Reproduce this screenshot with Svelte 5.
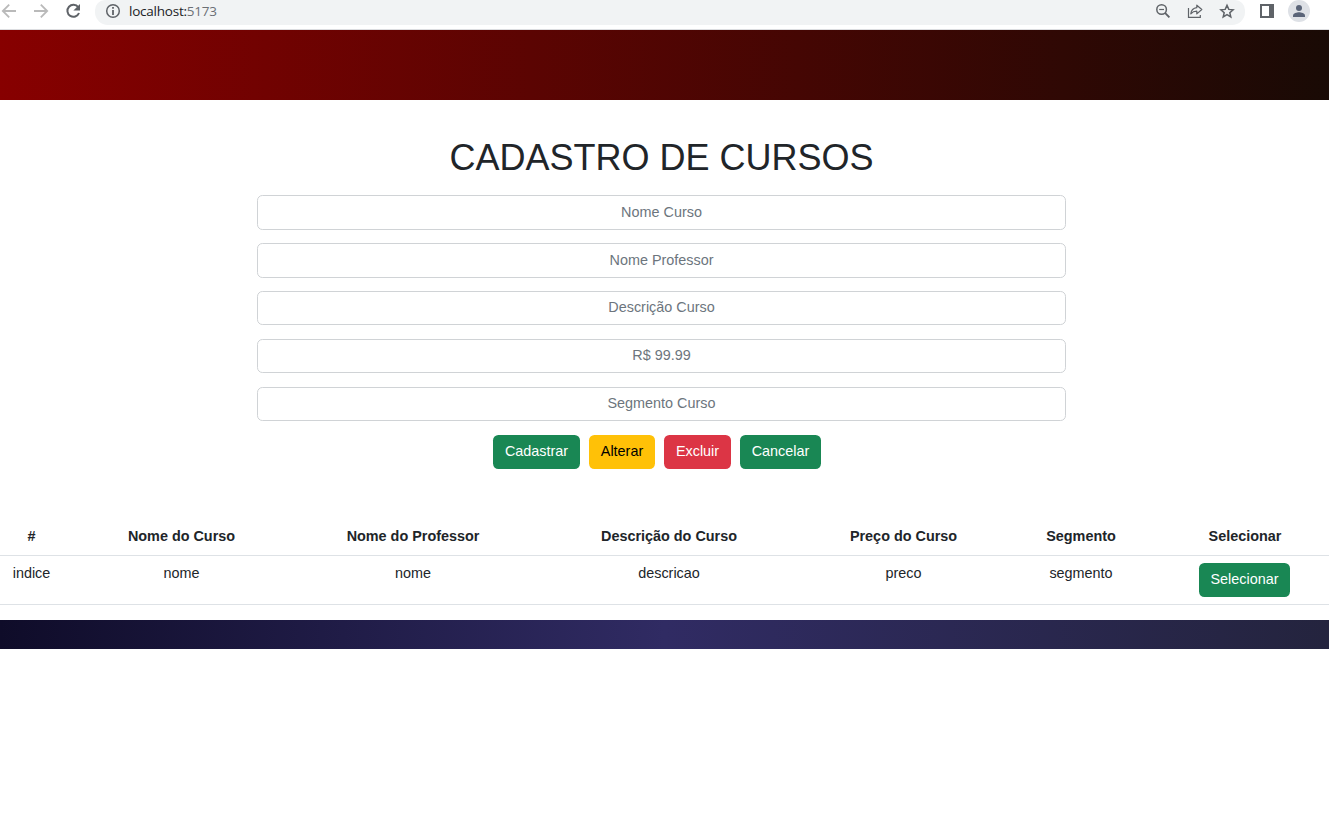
<script>
  const fields = ['Nome Curso', 'Nome Professor', 'Descrição Curso', 'R$ 99.99', 'Segmento Curso'];
  const headings = ['#', 'Nome do Curso', 'Nome do Professor', 'Descrição do Curso', 'Preço do Curso', 'Segmento', 'Selecionar'];
  const row = ['indice', 'nome', 'nome', 'descricao', 'preco', 'segmento'];
</script>

<div class="browser">
  <svg width="16" height="22" viewBox="0 0 16 22" fill="none" stroke="#bababa" stroke-width="1.8"><path d="M16 11H3M9.2 4.6 2.8 11l6.4 6.4" /></svg>
  <svg class="forward" width="16" height="22" viewBox="0 0 16 22" fill="none" stroke="#bababa" stroke-width="1.8"><path d="M1 11h13M7.8 4.6l6.4 6.4-6.4 6.4" /></svg>
  <svg class="reload" width="16" height="22" viewBox="0 0 16 22"><path d="M13.2 7.2A6 6 0 1 0 14 13" fill="none" stroke="#5f6368" stroke-width="2" /><path d="M15 4v6.6H8.4z" fill="#5f6368" /></svg>
  <div class="address">
    <svg width="16" height="22" viewBox="0 0 16 22"><circle cx="8" cy="11" r="6.3" fill="none" stroke="#5f6368" stroke-width="1.5" /><path d="M7.1 7h1.8v1.8H7.1zM7.1 10h1.8v5H7.1z" fill="#5f6368" /></svg>
    <span class="url">localhost:<i>5173</i></span>
    <svg class="tool" width="16" height="22" viewBox="0 0 16 22" fill="none" stroke="#5f6368"><circle cx="6.6" cy="9.5" r="4.8" stroke-width="1.5" /><path d="M10 12.9l4.4 4.4" stroke-width="1.9" /><path d="M4.2 9.5h4.8" stroke-width="1.2" /></svg>
    <svg class="tool" width="16" height="22" viewBox="0 0 16 22" fill="none" stroke="#5f6368" stroke-width="1.2"><path d="M1.5 8v9.4h11.8V15" /><path d="M9.8 5.2l5 4.3-5 4.4v-2.7c-2.7 0-4.5.8-6 2.6.4-3.4 2.4-5.7 6-6.1z" stroke-linejoin="round" /></svg>
    <svg class="tool" width="16" height="22" viewBox="0 0 16 22"><path d="M8 5.4l1.8 4 4.3.4-3.3 2.9 1 4.2L8 14.7l-3.8 2.2 1-4.2-3.3-2.9 4.3-.4z" fill="none" stroke="#5f6368" stroke-width="1.5" /></svg>
  </div>
  <svg class="panel" width="14" height="22" viewBox="0 0 14 22"><path d="M0 4h14v14H0zM2 6v10h7V6z" fill="#5f6368" fill-rule="evenodd" /></svg>
  <svg class="avatar" width="22" height="22" viewBox="0 0 22 22"><circle cx="11" cy="11" r="11" fill="#dee1e6" /><circle cx="11" cy="8" r="3" fill="#5a6478" /><path d="M5 17v-1.6c0-2.1 4-3.2 6-3.2s6 1.1 6 3.2V17z" fill="#5a6478" /></svg>
</div>

<header></header>

<main>
  <h1>CADASTRO DE CURSOS</h1>
  <form>
    {#each fields as field}
      <input type="text" placeholder={field} />
    {/each}
    <div class="actions">
      <button type="button" class="w1">Cadastrar</button>
      <button type="button" class="warning w2">Alterar</button>
      <button type="button" class="danger w3">Excluir</button>
      <button type="button" class="w4">Cancelar</button>
    </div>
  </form>
  <table>
    <colgroup><col class="c1" /><col class="c2" /><col class="c3" /><col class="c4" /><col class="c5" /><col class="c6" /><col /></colgroup>
    <thead>
      <tr>{#each headings as heading}<th>{heading}</th>{/each}</tr>
    </thead>
    <tbody>
      <tr>
        {#each row as cell}<td>{cell}</td>{/each}
        <td><button type="button" class="w5">Selecionar</button></td>
      </tr>
    </tbody>
  </table>
</main>

<footer></footer>

<style>
  :global(body) {
    margin: 0;
    background: #fff;
    color: #212529;
    font-family: "Liberation Sans", Arial, sans-serif;
    font-size: 14.4px;
    line-height: 21.6px;
    overflow: hidden;
  }
  .browser {
    box-sizing: border-box;
    display: flex;
    align-items: flex-start;
    height: 30px;
    border-bottom: 1px solid #dcdde0;
  }
  .browser svg { flex: none; display: block; }
  .forward { margin-left: 17px; }
  .reload { margin-left: 16px; }
  .address {
    box-sizing: border-box;
    display: flex;
    width: 1150px;
    height: 25px;
    margin-left: 14px;
    padding: 0 10px;
    background: #f1f3f4;
    border-radius: 10px 10px 13px 13px;
  }
  .url {
    flex: 1;
    margin-left: 8px;
    color: #202124;
    font: 13.5px/23px "Open Sans", sans-serif;
    letter-spacing: -0.23px;
  }
  .url i { font-style: normal; color: #6b6f74; }
  .tool + .tool { margin-left: 16px; }
  .panel { margin-left: 15px; }
  .avatar { margin-left: 14px; }
  header {
    height: 70px;
    background: linear-gradient(90deg, #870000, #190a05);
  }
  h1 {
    width: 1323px;
    margin: 0;
    padding: 36px 0 16px;
    font-size: 36px;
    font-weight: 400;
    line-height: 43px;
    text-align: center;
  }
  form {
    display: flex;
    flex-direction: column;
    width: 809px;
    margin-left: 257px;
  }
  input {
    box-sizing: border-box;
    height: 34px;
    margin: 0 0 14px;
    padding: 0 11px 2px;
    border: 1px solid #d0d3d6;
    border-radius: 5.4px;
    background: #fff;
    font: inherit;
    text-align: center;
  }
  input:nth-child(-n + 2) {
    height: 35px;
    margin-bottom: 13px;
    padding-bottom: 1px;
  }
  input::placeholder { color: #6c757d; opacity: 1; }
  .actions {
    display: flex;
    gap: 9px;
    padding-left: 236px;
  }
  button {
    height: 34px;
    padding: 0 0 1px;
    border: 0;
    border-radius: 5.4px;
    background: #198754;
    color: #fff;
    font: inherit;
    text-align: center;
  }
  .warning { background: #ffc107; color: #000; }
  .danger { background: #dc3545; }
  .w1 { width: 87px; }
  .w2 { width: 66px; }
  .w3 { width: 67px; }
  .w4 { width: 81px; }
  .w5 { width: 91px; display: block; margin: 0 auto; }
  table {
    width: 1329px;
    margin: 49px 0 15px;
    table-layout: fixed;
    border-collapse: separate;
    border-spacing: 0;
    text-align: center;
  }
  .c1 { width: 63px; }
  .c2 { width: 237px; }
  .c3 { width: 226px; }
  .c4 { width: 286px; }
  .c5 { width: 183px; }
  .c6 { width: 172px; }
  th, td {
    box-sizing: border-box;
    padding: 7px 0;
    border-bottom: 1px solid #dee2e6;
    vertical-align: top;
  }
  th { height: 38px; padding: 8px 0 6px; font-weight: 700; }
  td { height: 49px; }
  th:last-child, td:last-child { padding-right: 7px; }
  th:last-child { padding-right: 6px; }
  footer {
    height: 29px;
    background: linear-gradient(to right, #0f0c29, #302b63, #24243e);
  }
</style>
